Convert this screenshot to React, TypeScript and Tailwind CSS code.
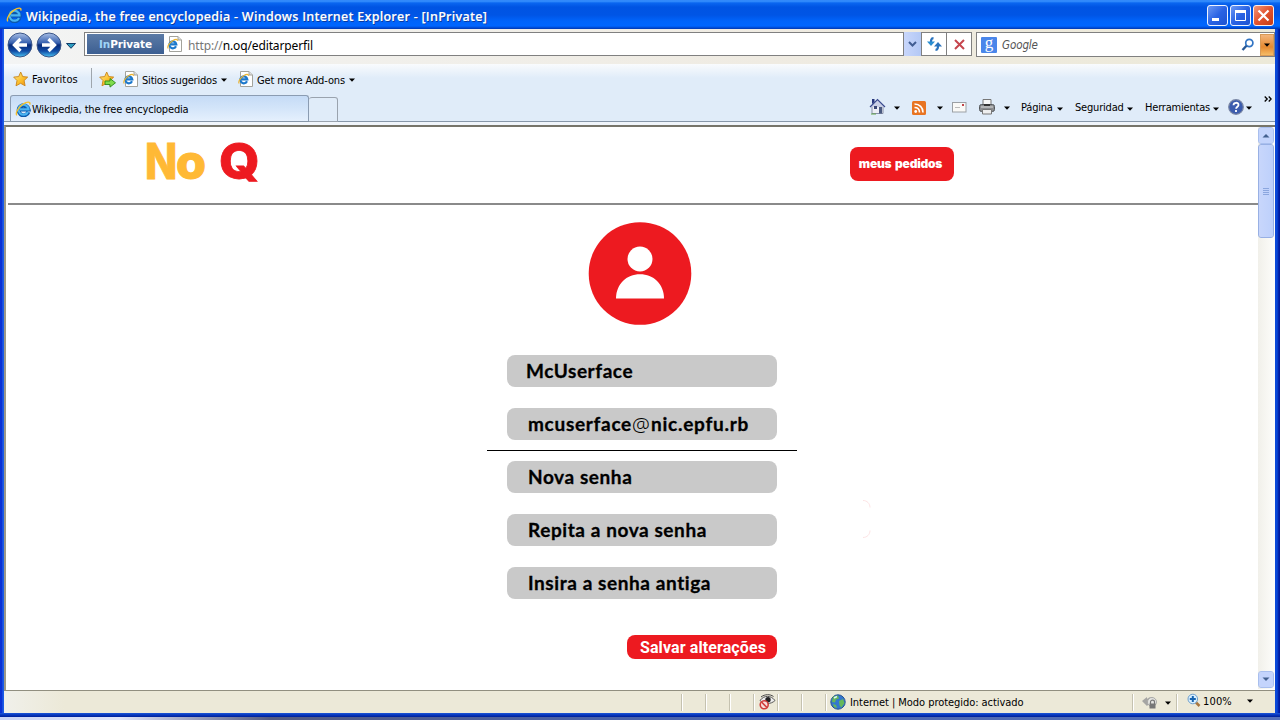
import React from 'react';

const ui = 'font-["DejaVu_Sans_Condensed","DejaVu_Sans",sans-serif] [font-stretch:condensed]';

function Caret({ className = '' }: { className?: string }) {
  return (
    <svg className={`h-[4px] w-[6px] shrink-0 ${className}`} viewBox="0 0 6 4">
      <path d="M0 0.5h6L3 3.8z" fill="#000" />
    </svg>
  );
}

function IELogo({ className = '' }: { className?: string }) {
  return (
    <svg className={`shrink-0 ${className}`} viewBox="0 0 16 16" fill="none">
      <path d="M13.400 11A5 5 0 1 1 13.600 8.500H5" stroke="#0c58ac" strokeWidth="4" />
      <path d="M13 10.900A5 5 0 1 1 13.500 8.400H5" stroke="#49b4f2" strokeWidth="2.200" />
      <path d="M1.800 14.400C.2 12 3.300 6.200 8 3.200 12 .5 15.700.3 14.800 3.600" stroke="#f5c02c" strokeWidth="1.400" />
    </svg>
  );
}

function PageIcon({ className = '' }: { className?: string }) {
  return (
    <svg className={`h-[16px] w-[15px] shrink-0 ${className}`} viewBox="0 0 15 16" fill="none">
      <path d="M2.500.5H11l3.500 3.500v11.500h-12z" fill="#fff" stroke="#a3a39c" />
      <path d="M11 .5V4h3.500" fill="#ddd" stroke="#a3a39c" />
      <path d="M9 10.300A3.500 3.500 0 1 1 9.300 8.300H3.500" stroke="#1c78cc" strokeWidth="2.200" />
      <path d="M1.200 12.500C-.3 10.600 3 6.200 6 4.500c2.500-1.500 4.800-1.500 4.300.3" stroke="#ecb532" strokeWidth="1.200" />
    </svg>
  );
}

function Star({ plus = false, className = '' }: { plus?: boolean; className?: string }) {
  return (
    <svg className={`h-[17px] w-[17px] shrink-0 ${className}`} viewBox="0 0 17 17">
      <defs>
        <linearGradient id="star" x1="0" y1="0" x2="1" y2="1">
          <stop offset="0" stopColor="#fff09a" />
          <stop offset=".55" stopColor="#fbc02c" />
          <stop offset="1" stopColor="#ee8a13" />
        </linearGradient>
      </defs>
      <path d="M7.700 1l2 4.600 5 .5-3.600 3.500 1 5.200-4.500-2.500-4.600 2.500 1-5.200L.7 6.100l5-.5z" fill="url(#star)" stroke="#c98318" strokeWidth=".9" strokeLinejoin="round" />
      {plus && <path d="M6 10h5V7.500l5.500 4.300-5.500 4.300v-2.600H6z" fill="#7fdc4c" stroke="#2d8a1c" strokeWidth=".9" />}
    </svg>
  );
}

function NavButton({ forward = false, className = '' }: { forward?: boolean; className?: string }) {
  return (
    <svg className={`h-[26px] w-[26px] shrink-0 ${className}`} viewBox="0 0 26 26">
      <defs>
        <linearGradient id="orb" x1="0" y1="0" x2="0" y2="1">
          <stop offset="0" stopColor="#a9bfe6" />
          <stop offset=".42" stopColor="#355fae" />
          <stop offset=".5" stopColor="#082a79" />
          <stop offset=".75" stopColor="#104ba5" />
          <stop offset="1" stopColor="#49c4f4" />
        </linearGradient>
      </defs>
      <circle cx="13" cy="13" r="12" fill="url(#orb)" stroke="#3c5688" strokeWidth="1" />
      <path d="M20 13H8.500M13.500 7L7.500 13l6 6" transform={forward ? 'rotate(180 13 13)' : undefined} fill="none" stroke="#fff" strokeWidth="3.300" />
    </svg>
  );
}

function TitleBar() {
  return (
    <header className="flex h-[29px] items-start bg-[linear-gradient(180deg,#2a80f5_0,#3a93ff_1px,#0a66f0_3px,#0054e3_7px,#0055e5_15px,#0064fa_21px,#0066ff_26px,#0046cc_28px,#0038b0_29px)]">
      <IELogo className="mt-[7px] ml-[6px] h-[16px] w-[16px]" />
      <h1 className='mt-[8px] ml-[4px] w-[1181px] whitespace-pre font-["Open_Sans","Noto_Sans",sans-serif] text-[12.500px] leading-[18px] font-semibold tracking-[0.27px] text-white [-webkit-text-stroke:0.15px_#fff] [text-shadow:1px_1px_0_#0a3a9e]'>Wikipedia, the free encyclopedia - Windows Internet Explorer - [InPrivate]</h1>
      <div className="mt-[5px] flex gap-[2px]">
        <svg className="h-[21px] w-[21px]" viewBox="0 0 21 21">
          <defs>
            <linearGradient id="wb" x1="0" y1="0" x2="1" y2="1">
              <stop offset="0" stopColor="#6f9bf5" /><stop offset=".5" stopColor="#2a63e4" /><stop offset="1" stopColor="#1d52d0" />
            </linearGradient>
            <linearGradient id="wr" x1="0" y1="0" x2="1" y2="1">
              <stop offset="0" stopColor="#f39b7d" /><stop offset=".5" stopColor="#e2532f" /><stop offset="1" stopColor="#c53a12" />
            </linearGradient>
          </defs>
          <rect x=".5" y=".5" width="20" height="20" rx="2.500" fill="url(#wb)" stroke="#eef3ff" />
          <rect x="5" y="13" width="7" height="3" fill="#fff" />
        </svg>
        <svg className="h-[21px] w-[21px]" viewBox="0 0 21 21">
          <rect x=".5" y=".5" width="20" height="20" rx="2.500" fill="url(#wb)" stroke="#eef3ff" />
          <path d="M5.500 6v9.500h10V6" fill="none" stroke="#fff" />
          <rect x="5" y="5" width="11" height="3" fill="#fff" />
        </svg>
        <svg className="h-[21px] w-[21px]" viewBox="0 0 21 21">
          <rect x=".5" y=".5" width="20" height="20" rx="2.500" fill="url(#wr)" stroke="#fbeee9" />
          <path d="M5.500 5.500l10 10M15.500 5.500l-10 10" stroke="#fff" strokeWidth="2.200" />
        </svg>
      </div>
    </header>
  );
}

function AddressBar() {
  return (
    <div className="flex h-[35px] items-start bg-[linear-gradient(90deg,#f3f4f4,#efebe2_60%,#ece9d8)]">
      <NavButton className="mt-[3px] ml-[3px]" />
      <NavButton forward className="mt-[3px] ml-[3px]" />
      <svg className="mt-[14px] ml-[4px] h-[6px] w-[10px]" viewBox="0 0 10 6"><path d="M.5.5h9L5 5.300z" fill="#2c9dc0" stroke="#123c68" /></svg>
      <div className="mt-[3px] ml-[8px] flex h-[24px] w-[820px] items-center border border-[#808080] bg-white pl-[2px]">
        <div className='flex h-[20px] w-[77px] items-center justify-center bg-[linear-gradient(180deg,#5c7ba6,#3c5f92)] pt-[2px] font-["DejaVu_Sans",sans-serif] text-[10.500px] font-bold tracking-[-0.1px] text-white'>
          <span className="text-[#9fd4f6]">In</span>Private
        </div>
        <PageIcon className="ml-[3px]" />
        <p className="mt-[3px] ml-[6px] font-['Noto_Sans','Open_Sans',sans-serif] text-[12px] leading-[18px] tracking-[-0.13px] whitespace-pre text-black"><span className="text-[#777]">http://</span>n.oq/editarperfil</p>
      </div>
      <div className="mt-[3px] flex h-[24px] w-[17px] items-center justify-center bg-[linear-gradient(90deg,#c8d6fb,#b3c8f5)]">
        <svg className="h-[6px] w-[9px]" viewBox="0 0 9 6"><path d="M1 1l3.500 3.500L8 1" fill="none" stroke="#415d93" strokeWidth="2" /></svg>
      </div>
      <div className="mt-[3px] flex h-[24px] w-[26px] items-center justify-center border border-[#808080] bg-white">
        <svg className="h-[14px] w-[15px]" viewBox="0 0 15 14" fill="none" stroke="#2a73bd" strokeWidth="2.200">
          <path d="M6.500 1.200C3.700 1.200 4 4 4 7" /><path d="M0 4.500L4 9l4-4.500z" fill="#2a8ed1" stroke="none" />
          <path d="M8.500 12.800c2.800 0 2.500-2.800 2.500-5.800" /><path d="M7 9.500L11 5l4 4.500z" fill="#2a73bd" stroke="none" />
        </svg>
      </div>
      <div className="mt-[3px] flex h-[24px] w-[25px] items-center justify-center border border-l-0 border-[#808080] bg-white">
        <svg className="h-[11px] w-[11px]" viewBox="0 0 11 11"><path d="M1 1l9 9M10 1l-9 9" stroke="#c6454d" strokeWidth="2" /></svg>
      </div>
      <div className="mt-[3px] ml-[4px] flex h-[25px] w-[299px] items-center border border-[#808080] bg-white pl-[4px]">
        <div className='flex h-[16px] w-[16px] shrink-0 items-center justify-center rounded-[1px] bg-[#4a86ea] font-["Liberation_Serif",serif] text-[17px] leading-none text-white'><span className="-mt-[5px]">g</span></div>
        <span className={`${ui} mt-[3px] ml-[5px] w-[239px] text-[11.500px] tracking-[-0.1px] text-[#555] italic`}>Google</span>
        <svg className="h-[14px] w-[14px] shrink-0" viewBox="0 0 14 14" fill="none"><circle cx="8.300" cy="5" r="3.600" stroke="#3275c4" strokeWidth="1.700" /><path d="M5.500 7.700L1.500 12" stroke="#275896" strokeWidth="2.400" /></svg>
        <div className="ml-[5px] flex h-[22px] w-[14px] shrink-0 items-center justify-center border border-[#d89a57] bg-[linear-gradient(180deg,#f3b57c,#e68a30_60%,#f5bc66)]"><Caret /></div>
      </div>
    </div>
  );
}

function FavoritesBar() {
  return (
    <div className={`${ui} flex h-[31px] items-start text-[11px] leading-[14px] tracking-[-0.2px] whitespace-nowrap text-black`}>
      <Star className="mt-[7px] ml-[9px]" />
      <span className="mt-[9px] ml-[2px] w-[59px] tracking-[0.15px]">Favoritos</span>
      <span className="mt-[4px] h-[20px] w-px bg-[#9fa6ad]" />
      <Star plus className="mt-[7px] ml-[7px]" />
      <PageIcon className="mt-[7px] ml-[7px]" />
      <span className="mt-[10px] ml-[4px] w-[79px]">Sitios sugeridos</span>
      <Caret className="mt-[14px]" />
      <PageIcon className="mt-[7px] ml-[11px]" />
      <span className="mt-[10px] ml-[4px] w-[92px] tracking-[-0.12px]">Get more Add-ons</span>
      <Caret className="mt-[14px]" />
    </div>
  );
}

function CommandBar() {
  return (
    <div className={`${ui} flex h-[27px] items-start border-b border-[#8797a9] text-[11px] leading-[14px] tracking-[-0.2px] whitespace-nowrap text-black`}>
      <div className="ml-[6px] flex h-[26px] w-[299px] shrink-0 items-center rounded-t-[3px] border border-b-0 border-[#8b9cb2] bg-[linear-gradient(180deg,#c5dbf6,#d2e4f9_45%,#e5f0fd)] pl-[4px]">
        <IELogo className="h-[16px] w-[16px]" />
        <span className="mt-[3px] ml-[1px] tracking-[-0.17px]">Wikipedia, the free encyclopedia</span>
      </div>
      <div className="mt-[2px] h-[25px] w-[29px] shrink-0 rounded-t-[3px] border border-l-0 border-[#9aa3ae]" />
      <svg className="mt-[3px] ml-[531px] h-[17px] w-[17px] shrink-0" viewBox="0 0 17 17">
        <path d="M3 9v6.500h11V9" fill="#eceef6" stroke="#8990a8" />
        <path d="M1 9L8.500 1.500 16 9" fill="#c9cfe6" stroke="#3b4b8f" strokeWidth="1.200" />
        <path d="M3 6V1h2.500v3" fill="#27367c" />
        <rect x="5" y="8" width="3" height="3" fill="#3a4775" /><rect x="10" y="9" width="3" height="6.500" fill="#4a5a80" />
        <path d="M2 16h5" stroke="#63a54b" />
      </svg>
      <Caret className="mt-[11px] ml-[8px]" />
      <svg className="mt-[6px] ml-[12px] h-[14px] w-[14px] shrink-0" viewBox="0 0 14 14" fill="none">
        <rect width="14" height="14" rx="1.500" fill="#e87422" />
        <circle cx="3.700" cy="10.500" r="1.400" fill="#fff" />
        <path d="M2.500 6.500c3 0 5 2 5 5M2.500 3c5 0 8.500 3.500 8.500 8.500" stroke="#fff" strokeWidth="1.600" />
      </svg>
      <Caret className="mt-[11px] ml-[11px]" />
      <svg className="mt-[7px] ml-[9px] h-[11px] w-[15px] shrink-0" viewBox="0 0 15 11"><rect x=".5" y=".5" width="13.500" height="9.500" fill="#f9f9f7" stroke="#9ba0a5" /><path d="M3 5.500h5" stroke="#bbb" /><rect x="10" y="2" width="2" height="2" fill="#c2454a" /></svg>
      <svg className="mt-[4px] ml-[12px] h-[16px] w-[16px] shrink-0" viewBox="0 0 16 16">
        <path d="M4 6V.5h8V6" fill="#f8f8f8" stroke="#777" />
        <rect x=".5" y="5.500" width="15" height="7" rx="2" fill="#8b8d90" stroke="#55585c" />
        <path d="M2 8h12" stroke="#ddd" /><path d="M3.500 10.500h9V15h-9z" fill="#eee" stroke="#777" />
        <path d="M5 6h6" stroke="#333" strokeWidth="2" />
      </svg>
      <Caret className="mt-[11px] ml-[9px]" />
      <span className="mt-[6px] ml-[11px] w-[37px]">Página</span>
      <Caret className="mt-[12px] -ml-px" />
      <span className="mt-[6px] ml-[12px] w-[53px]">Seguridad</span>
      <Caret className="mt-[12px] -ml-px" />
      <span className="mt-[6px] ml-[12px] w-[69px]">Herramientas</span>
      <Caret className="mt-[12px] -ml-px" />
      <svg className="mt-[4px] ml-[9px] h-[16px] w-[16px] shrink-0" viewBox="0 0 16 16" fill="none">
        <circle cx="8" cy="8" r="7.300" fill="#3b5cae" stroke="#7a87a5" strokeWidth="1.200" />
        <path d="M5.500 6.200C5.500 3 10.700 3 10.500 6c0 1.700-2.400 1.700-2.400 3.700M8 11v2" stroke="#fff" strokeWidth="1.800" />
      </svg>
      <Caret className="mt-[11px] ml-[2px]" />
      <svg className="mt-[1px] ml-[12px] h-[6px] w-[8px] shrink-0" viewBox="0 0 8 6"><path d="M.7.5L3.200 3 .7 5.500M4.700.5L7.200 3 4.700 5.500" fill="none" stroke="#000" strokeWidth="1.300" /></svg>
    </div>
  );
}

function Field({ children, className = 'pl-[21px]' }: { children: React.ReactNode; className?: string }) {
  return <div className={`mb-[21px] flex h-[32px] w-[270px] items-center rounded-[8px] bg-[#c9c9c9] pb-[2px] text-[19px] leading-none font-bold tracking-[0.58px] whitespace-nowrap text-black [-webkit-text-stroke:0.3px_#000] ${className}`}>{children}</div>;
}

function ArrowButton({ down = false }: { down?: boolean }) {
  return (
    <div className="flex h-[15px] w-[14px] shrink-0 items-center justify-center rounded-[2px] bg-[#c4d4fc] outline outline-[#a9bfee]">
      <svg className="h-[5px] w-[8px]" viewBox="0 0 8 5"><path d={down ? 'M.5.5L4 4 7.500.5z' : 'M.5 4.500L4 1l3.500 3.500z'} fill="#43608f" /></svg>
    </div>
  );
}

function Page() {
  return (
    <main className="relative h-[562px] w-[1252px] pl-[2px] font-[Lato,sans-serif]">
      <div className="flex h-[78px] items-start border-b-2 border-[#8a8a8a]">
        <div className="ml-[137px] flex w-[705px] items-baseline font-[Inter,sans-serif] text-[49px] leading-[70px] font-extrabold">
          <span className="w-[31px] origin-left scale-x-[0.86] text-[#ffb935] [-webkit-text-stroke:0.8px_#ffb935]">N</span>
          <span className="w-[43px] origin-left scale-x-[1.03] text-[47px] text-[#ffb935] [-webkit-text-stroke:1px_#ffb935]">o</span>
          <span className="origin-left scale-x-[1.06] text-[#ed1a20] [-webkit-text-stroke:0.8px_#ed1a20]">Q</span>
        </div>
        <button className="mt-[20px] h-[34px] w-[104px] shrink-0 rounded-[8px] bg-[#ed1a20] pr-[3px] font-[Inter,sans-serif] text-[12px] font-black tracking-[-0.22px] [word-spacing:1.5px] whitespace-nowrap text-white">meus pedidos</button>
      </div>
      <div className="flex w-[1264px] flex-col items-center">
        <svg className="mt-[17px] h-[103px] w-[104px]" viewBox="0 0 104 103">
          <circle cx="52" cy="51.500" r="51.300" fill="#ed1a20" />
          <circle cx="52" cy="37" r="12.500" fill="#fff" />
          <path d="M28 76.500C28 62 38.500 52.200 52 52.200S76 62 76 76.500z" fill="#fff" />
        </svg>
        <form className="mt-[30px] ml-[4px] flex w-[310px] flex-col items-center">
          <Field className="pl-[19px]">McUserface</Field>
          <Field><span className="tracking-[0.7px]">mcuserface</span><span className="w-[19px] pt-[3px] font-['Noto_Sans',sans-serif] text-[20px] font-light tracking-normal [-webkit-text-stroke:0]">@</span><span className="tracking-[0.75px]">nic.epfu.rb</span></Field>
          <hr className="-mt-[11px] mb-[10px] w-full border-t border-black" />
          <Field>Nova senha</Field>
          <Field>Repita a nova senha</Field>
          <Field>Insira a senha antiga</Field>
          <button className="mt-[15px] mr-[20px] h-[24px] w-[150px] self-end rounded-[8px] bg-[#ed1a20] pt-px pl-[2px] font-[Roboto,sans-serif] text-[16px] leading-none font-bold tracking-[0.1px] whitespace-nowrap text-white">Salvar alterações</button>
        </form>
      </div>
      <svg className="absolute top-[372px] left-[856px] h-[40px] w-[9px]" viewBox="0 0 9 40" fill="none" stroke="#fbdcdd" strokeWidth=".8">
        <path d="M1 1.500c4 0 7 3 7 7M1 38.500c4 0 7-3 7-7" />
      </svg>
    </main>
  );
}

function Scrollbar() {
  return (
    <aside className="flex h-[562px] w-[17px] flex-col items-center bg-[linear-gradient(90deg,#f1f0ea,#fdfdfb)] pt-[1px] pr-[2px] pb-[2px]">
      <ArrowButton />
      <div className="mt-[2px] flex h-[92px] w-[14px] flex-col items-center justify-center gap-px rounded-[2px] bg-[linear-gradient(90deg,#c8d6fb,#bdd0fb)] outline outline-[#98b0e4]">
        {[0, 1, 2, 3].map((n) => <span key={n} className="h-px w-[6px] bg-[#8ba6de]" />)}
      </div>
      <div className="mt-auto"><ArrowButton down /></div>
    </aside>
  );
}

function Divider({ className = '' }: { className?: string }) {
  return <span className={`h-[17px] w-[2px] shrink-0 border-r border-white bg-[#c5c2b0] ${className}`} />;
}

function StatusBar() {
  return (
    <footer className={`${ui} flex h-[23px] items-center border-t border-[#918f80] bg-[linear-gradient(90deg,#f0f0ea,#ece9d8_60px)] text-[11px] tracking-[-0.05px] whitespace-nowrap text-black`}>
      <Divider className="ml-[677px]" />
      <Divider className="ml-[22px]" /><Divider className="ml-[22px]" /><Divider className="ml-[22px]" />
      <svg className="ml-[4px] h-[16px] w-[17px] shrink-0" viewBox="0 0 17 16" fill="none">
        <path d="M1 6.500C5 1 12 1 16 6.500c-4 4-11 4-15 0z" fill="#eee" stroke="#555" /><path d="M2 3C6 0 11 0 14.500 2.500" stroke="#444" />
        <circle cx="9" cy="5.800" r="2.700" fill="#222" /><circle cx="5.200" cy="10.800" r="4" fill="#f7dedb" stroke="#d13d3a" strokeWidth="1.600" /><path d="M2.500 8l5.500 5.500" stroke="#d13d3a" strokeWidth="1.600" />
      </svg>
      <Divider className="ml-[1px]" /><Divider className="ml-[22px]" /><Divider className="ml-[22px]" />
      <svg className="ml-[3px] h-[16px] w-[16px] shrink-0" viewBox="0 0 16 16">
        <circle cx="8" cy="8" r="7.200" fill="#3478cd" stroke="#275391" />
        <path d="M3 2.500l5-1 1 3-3 1-1 3-3-.5zM9 7l4-2 1.500 4-3 4.500-2-2zM3 10l3 1 1 3-3-1z" fill="#66b85a" /><path d="M4 4l3-1.500" stroke="#d9f2ff" strokeWidth="1.500" />
      </svg>
      <span className="mt-[2px] ml-[4px] w-[282px]">Internet | Modo protegido: activado</span>
      <Divider />
      <svg className="ml-[8px] h-[15px] w-[16px] shrink-0" viewBox="0 0 16 15"><path d="M0 6l5-4v2c3-3 7-2 9 2l-4 1-3 2-2 2z" fill="#a5a5a3" /><circle cx="10" cy="7" r="4.500" fill="#e5e5e2" stroke="#a9a9a6" /><path d="M8.500 9V7c0-2.500 4-2.500 4 0v2" fill="none" stroke="#777" strokeWidth="1.200" /><rect x="7.500" y="8.500" width="6" height="5" fill="#777" /></svg>
      <Caret className="mt-[1px] ml-[7px]" />
      <Divider className="ml-[5px]" />
      <svg className="-mt-[4px] ml-[9px] h-[15px] w-[14px] shrink-0" viewBox="0 0 14 15" fill="none"><path d="M8.500 9l4 4" stroke="#a9763d" strokeWidth="2.500" /><circle cx="5.800" cy="6" r="4.800" fill="#d8efff" stroke="#70a0cc" /><path d="M2.800 6h6M5.800 3v6" stroke="#1765b1" strokeWidth="2" /></svg>
      <span className="ml-[2px] w-[44px] tracking-[0.15px]">100%</span>
      <Caret className="-mt-[2px]" />
    </footer>
  );
}

export default function App() {
  return (
    <div className="h-[720px] w-[1280px] overflow-hidden bg-[linear-gradient(90deg,#c9d3f5,#e0e4fa_120px,#555b80_270px,#4b62a8_600px,#5470bb)]">
      <div className="h-[717px] bg-[linear-gradient(90deg,#0831d9_0,#0a30d0_2px,#2668ee_3px,#0f4fdf_4px,#0a48d8_1275px,#0a48d8_1277px,#001ba0_1279px)]">
        <TitleBar />
        <div className="ml-[4px] w-[1271px]">
          <AddressBar />
          <div className="bg-[linear-gradient(180deg,#f9fbfd,#e0ecf9_14px)]">
            <FavoritesBar />
            <CommandBar />
          </div>
          <div className="h-[3px] bg-[#f0f5fb]" />
          <div className="flex h-[565px] items-start border-t-2 border-l-2 border-t-[#77756a] border-l-[#9b988a] bg-white">
            <Page />
            <Scrollbar />
          </div>
          <StatusBar />
        </div>
        <div className="h-[4px] bg-[linear-gradient(180deg,#1c56d8,#0636bd_2px,#00209a)]" />
      </div>
    </div>
  );
}
